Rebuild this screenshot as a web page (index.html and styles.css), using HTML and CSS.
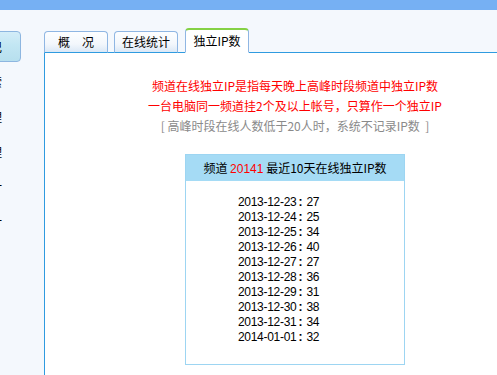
FILE: index.html
```html
<!DOCTYPE html>
<html lang="zh-CN">
  <head>
    <meta charset="UTF-8" />
    <title>独立IP数</title>
    <link rel="stylesheet" href="styles.css">
  </head>
  <body>
    <div class="topbar"></div>

    <div class="main">
      <nav class="sidebar">
        <a class="side-item valgt">频道日记</a>
        <a class="side-item">频道搜索</a>
        <a class="side-item">成员管理</a>
        <a class="side-item">帐号管理</a>
        <a class="side-item">日志统计</a>
        <a class="side-item">频道设计</a>
      </nav>

      <section class="content">
        <div class="tabs">
          <button class="tab">概　况</button>
          <button class="tab">在线统计</button>
          <button class="tab aktiv">独立IP数</button>
        </div>

        <div class="panel">
          <p class="note red">频道在线独立IP是指每天晚上高峰时段频道中独立IP数</p>
          <p class="note red">一台电脑同一频道挂2个及以上帐号，只算作一个独立IP</p>
          <p class="note grey">[ 高峰时段在线人数低于20人时，系统不记录IP数&nbsp; ]</p>

          <div class="ipbox">
            <h2>频道 <span class="red">20141</span> 最近10天在线独立IP数</h2>
            <ul class="iplist"></ul>
          </div>
        </div>
      </section>
    </div>

    <script>
      const dage = [
        ["2013-12-23", 27],
        ["2013-12-24", 25],
        ["2013-12-25", 34],
        ["2013-12-26", 40],
        ["2013-12-27", 27],
        ["2013-12-28", 36],
        ["2013-12-29", 31],
        ["2013-12-30", 38],
        ["2013-12-31", 34],
        ["2014-01-01", 32],
      ];

      const liste = document.querySelector(".iplist");
      dage.forEach((dag) => {
        const li = document.createElement("li");
        li.innerHTML =
          '<span class="dato">' + dag[0] + '</span><span class="kolon">:</span><span class="tal">' + dag[1] + "</span>";
        liste.appendChild(li);
      });
    </script>
  </body>
</html>
```

FILE: styles.css
```css
* {
  margin: 0;
  padding: 0;
  box-sizing: border-box;
  --topblue: #76b0f3;
  --light: #f4f8fd;
  --line: #2f9be0;
  --tabline: #8fb6e3;
  --boxline: #9dd5f2;
  --boxhead: #a5dbf5;
}

html,
body {
  overflow: hidden;
  height: 100%;
}

body {
  background-color: white;
  font-family: "Liberation Sans", "Noto Sans CJK SC", sans-serif;
  font-size: 12px;
  color: black;
}

.red {
  color: #ff0000;
}

.topbar {
  height: 10px;
  background-color: var(--topblue);
}

.main {
  display: flex;
  height: 365px;
}

.sidebar {
  width: 44px;
  flex-shrink: 0;
  background-color: var(--light);
  padding-top: 21px;
  display: flex;
  flex-direction: column;
  gap: 4px;
  overflow: hidden;
}

.side-item {
  display: block;
  margin-left: -60px;
  width: 81px;
  height: 31px;
  line-height: 29px;
  padding-right: 18px;
  text-align: right;
  font-family: "Noto Sans CJK SC", sans-serif;
  font-size: 12px;
  color: black;
  border: 1px solid transparent;
}

.side-item.valgt {
  background: linear-gradient(#d3edf8, #c2e6f3 45%, #b7dfee);
  border-color: #8db6e0;
  border-radius: 0 4px 4px 0;
}

.content {
  flex: 1;
  display: flex;
  flex-direction: column;
}

.tabs {
  height: 43px;
  background-color: var(--light);
  display: flex;
  align-items: flex-end;
  gap: 6px;
  border-bottom: 1px solid var(--line);
}

.tab {
  width: 64px;
  height: 22px;
  margin-bottom: -1px;
  border: 1px solid var(--tabline);
  border-bottom: 1px solid var(--line);
  border-radius: 4px 4px 0 0;
  background: linear-gradient(#fdfeff, #f3f7fc 60%, #dbe8f6);
  font-family: "Noto Sans CJK SC", sans-serif;
  font-size: 12px;
  line-height: 20px;
  color: black;
}

.tab.aktiv {
  height: 25px;
  margin-left: 1px;
  background: white;
  border-top: 2px solid #84d145;
  border-bottom-color: white;
  line-height: 22px;
}

.panel {
  flex: 1;
  background-color: white;
  border-left: 1px solid var(--line);
  padding-top: 23px;
  padding-left: 48px;
  text-align: center;
}

.note {
  line-height: 20px;
  font-family: "Noto Sans CJK SC", sans-serif;
  font-size: 12px;
  white-space: nowrap;
}

.note.grey {
  color: #8a8a8a;
}

.ipbox {
  width: 220px;
  margin: 18px auto 0;
  border: 1px solid var(--boxline);
  text-align: left;
}

.ipbox h2 {
  height: 26px;
  line-height: 26px;
  background-color: var(--boxhead);
  text-align: center;
  font-family: "Noto Sans CJK SC", sans-serif;
  font-size: 12px;
  font-weight: normal;
}

.ipbox h2 .red {
  font-family: "Liberation Sans", sans-serif;
}

.iplist {
  list-style: none;
  padding: 14px 0 19px 52px;
}

.iplist li {
  height: 15px;
  line-height: 15px;
  white-space: nowrap;
}

.dato,
.tal {
  letter-spacing: -0.3px;
}

.kolon {
  font-weight: bold;
  margin: 0 4px 0 2px;
}
```
